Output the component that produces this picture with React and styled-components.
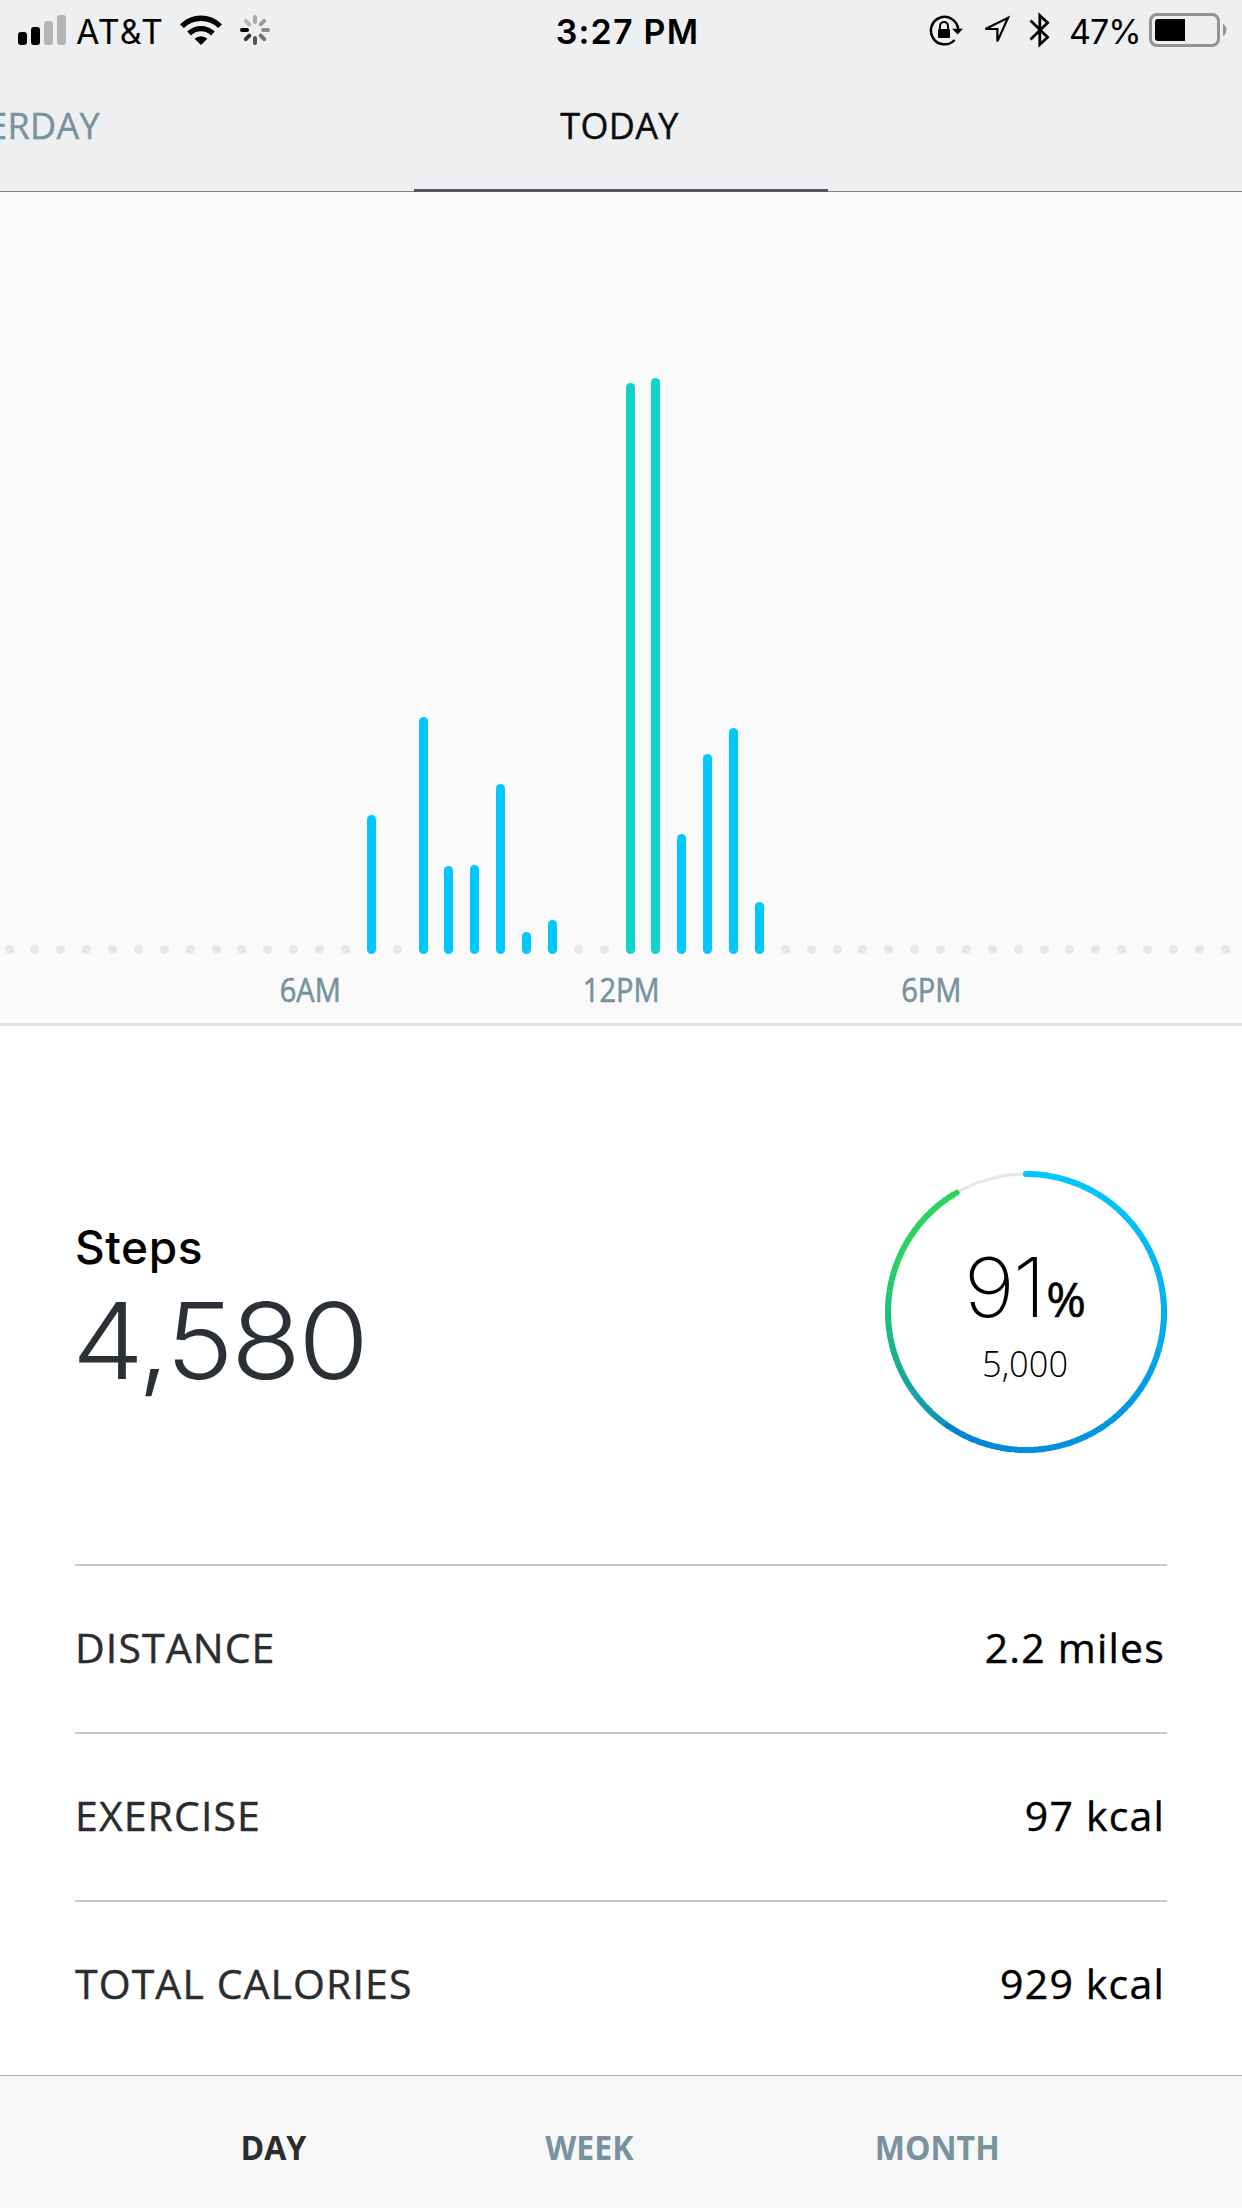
import styled, { createGlobalStyle } from "styled-components";

const GlobalStyle = createGlobalStyle`
*{
    box-sizing:border-box;
}
body{
    margin:0;
    background:#fff;
}
`

// half-hour slots, value is the bar height (0 = no activity)
const slots = Array(48).fill(0)
const activity = {
    14: 139, 16: 237, 17: 88, 18: 89, 19: 170, 20: 22, 21: 34,
    24: 571, 25: 576, 26: 120, 27: 200, 28: 226, 29: 52
}
Object.keys(activity).forEach((i) => { slots[i] = activity[i] })

const stats = [
    { label: "DISTANCE", value: "2.2 miles" },
    { label: "EXERCISE", value: "97 kcal" },
    { label: "TOTAL CALORIES", value: "929 kcal" },
]

// colour stops of the goal ring: degrees from the top, rgb
const ringStops = [
    [0, [0, 200, 255]],
    [50, [4, 192, 250]],
    [90, [0, 174, 240]],
    [135, [0, 152, 226]],
    [180, [4, 142, 220]],
    [214, [4, 128, 206]],
    [215, [16, 148, 180]],
    [245, [26, 172, 150]],
    [270, [34, 192, 122]],
    [290, [44, 208, 104]],
    [330, [46, 211, 94]],
]

const ringColor = (deg) => {
    const i = Math.max(1, ringStops.findIndex(([d]) => d >= deg))
    const [d0, a] = ringStops[i - 1]
    const [d1, b] = ringStops[i]
    const t = (deg - d0) / (d1 - d0)
    return `rgb(${a.map((c, k) => Math.round(c + (b[k] - c) * t)).join(",")})`
}

const point = (deg, r = 138) => {
    const a = (deg * Math.PI) / 180
    return `${(141 + r * Math.sin(a)).toFixed(2)} ${(141 - r * Math.cos(a)).toFixed(2)}`
}

function GoalRing() {
    const arcs = []
    for (let d = 0; d < 329; d += 2) {
        arcs.push(d)
    }
    return (
        <RingSvg viewBox="0 0 282 282">
            <circle cx="141" cy="141" r="138" fill="none" stroke="#e4e7e9" strokeWidth="3" />
            {arcs.map((d) => {
                const end = Math.min(d + 2.4, 329.8)
                return (
                    <path
                        key={d}
                        d={`M${point(d)}A138 138 0 0 1 ${point(end)}`}
                        fill="none"
                        stroke={ringColor(d)}
                        strokeWidth="6"
                        strokeLinecap={d === 0 || d >= 328 ? "round" : "butt"}
                    />
                )
            })}
        </RingSvg>
    )
}

function StatusBar() {
    return (
        <StatusWrapper>
            <StatusSide>
                <svg width="49" height="31" viewBox="0 0 49 31">
                    <rect x="0" y="17" width="9" height="13" rx="3" />
                    <rect x="13" y="12" width="9" height="18" rx="3" />
                    <rect x="26" y="6" width="9" height="24" rx="3" fill="#b3b4b5" />
                    <rect x="39" y="0" width="9" height="30" rx="3" fill="#b3b4b5" />
                </svg>
                <Carrier>AT&amp;T</Carrier>
                <Wifi width="42" height="30" viewBox="0 0 42 30">
                    <path d="M0 9.2A29.8 29.8 0 0 1 42 9.2L38.2 13A24.4 24.4 0 0 0 3.8 13Z" />
                    <path d="M7.2 16.6A19.6 19.6 0 0 1 34.8 16.6L31 20.4A14.2 14.2 0 0 0 11 20.4Z" />
                    <path d="M14.6 23.8A9.2 9.2 0 0 1 27.4 23.8L21 30Z" />
                </Wifi>
                <svg width="30" height="30" viewBox="-15 -15 30 30">
                    {["#a8a9aa", "#9a9b9c", "#8a8b8c", "#707172", "#555", "#333", "#000", "#b5b6b7"].map((c, i) => (
                        <line key={i} x1="0" y1="-13" x2="0" y2="-8" stroke={c} strokeWidth="4" strokeLinecap="round" transform={`rotate(${i * 45})`} />
                    ))}
                </svg>
            </StatusSide>
            <Clock>3:27 PM</Clock>
            <StatusSide $end>
                <svg width="35" height="36" viewBox="0 0 35 36">
                    <path d="M25.6 28A13.7 13.7 0 1 1 29.2 17" fill="none" stroke="#000" strokeWidth="2.5" />
                    <path d="M23.2 16.8H34L28.6 22.6Z" />
                    <rect x="9" y="17" width="12" height="9" rx="1" />
                    <path d="M11 17.5V14A4 4 0 0 1 19 14V17.5" fill="none" stroke="#000" strokeWidth="2" />
                </svg>
                <Locate width="30" height="36" viewBox="0 0 30 36">
                    <path d="M4.4 17L27 5.8L16.4 29.4V17Z" fill="none" stroke="#000" strokeWidth="2.2" />
                </Locate>
                <Bluetooth width="22" height="36" viewBox="0 0 22 36">
                    <path d="M1.5 8.6L18.6 25.2L10.8 32.6V3.4L18.6 10.8L1.5 27.4" fill="none" stroke="#000" strokeWidth="2.8" />
                </Bluetooth>
                <Percent>47%</Percent>
                <svg width="78" height="34" viewBox="0 0 78 34">
                    <rect x="1.5" y="1.5" width="68" height="31" rx="6.5" fill="none" stroke="#929394" strokeWidth="3" />
                    <path d="M9 6H36V28H9A3 3 0 0 1 6 25V9A3 3 0 0 1 9 6Z" />
                    <path d="M74 11A7 7 0 0 1 74 23Z" fill="#929394" />
                </svg>
            </StatusSide>
        </StatusWrapper>
    )
}

function App() {
    return (
        <Page>
            <GlobalStyle />
            <Header>
                <StatusBar />
                <Tabs>
                    <Tab $past>YESTERDAY</Tab>
                    <Tab $active>TODAY</Tab>
                </Tabs>
            </Header>

            <Chart>
                <Bars>
                    {slots.map((h, i) => (
                        <Slot key={i}>
                            <Bar $goal={h > 500} $on={h > 0} style={{ height: h || 9 }} />
                        </Slot>
                    ))}
                </Bars>
                <Axis>
                    <span>6AM</span>
                    <span>12PM</span>
                    <span>6PM</span>
                </Axis>
            </Chart>

            <Summary>
                <div>
                    <StepsLabel>Steps</StepsLabel>
                    <StepsCount>4,580</StepsCount>
                </div>
                <Goal>
                    <GoalRing />
                    <GoalPercent><b>91</b><small>%</small></GoalPercent>
                    <GoalTarget>5,000</GoalTarget>
                </Goal>
            </Summary>

            <Stats>
                {stats.map(({ label, value }) => (
                    <StatRow key={label}>
                        <StatLabel>{label}</StatLabel>
                        <StatValue>{value}</StatValue>
                    </StatRow>
                ))}
            </Stats>

            <Footer>
                <Range $active>DAY</Range>
                <Range>WEEK</Range>
                <Range>MONTH</Range>
            </Footer>
        </Page>
    )
}

const Page = styled.div`
width:1242px;
height:2208px;
display:flex;
flex-direction:column;
overflow:hidden;
background:#fff;
color:#000;
font-family:"Open Sans", "Noto Sans", sans-serif;
`

const Header = styled.header`
height:192px;
background:#eeeff1;
border-bottom:1px solid #808388;
`

const StatusWrapper = styled.div`
height:63px;
display:grid;
grid-template-columns:1fr auto 1fr;
font-family:Inter, sans-serif;
font-size:34px;
line-height:63px;
white-space:nowrap;
`

const StatusSide = styled.div`
display:flex;
align-items:center;
height:60px;
justify-content:${(p) => (p.$end ? "flex-end" : "flex-start")};
padding:${(p) => (p.$end ? "0 15px 0 0" : "0 0 0 18px")};
svg{
    flex:none;
}
`

const Carrier = styled.span`
width:104px;
margin-left:9px;
line-height:62px;
letter-spacing:1.2px;
padding-top:3px;
`

const Wifi = styled.svg`
margin-right:18px;
`

const Clock = styled.div`
padding-left:13px;
font-weight:600;
letter-spacing:1.2px;
`

const Locate = styled.svg`
margin-left:17px;
`

const Bluetooth = styled.svg`
margin-left:18px;
`

const Percent = styled.span`
width:80px;
margin-left:18px;
padding-top:3px;
letter-spacing:-1px;
`

const Tabs = styled.nav`
height:129px;
display:grid;
grid-template-columns:repeat(3, 414px);
`

const Tab = styled.div`
display:flex;
justify-content:${(p) => (p.$past ? "flex-end" : "center")};
padding-right:${(p) => (p.$past ? "314px" : "3px")};
line-height:126px;
font-size:36px;
letter-spacing:0.3px;
-webkit-text-stroke:0.4px;
color:${(p) => (p.$active ? "#0b0c0e" : "#78929e")};
border-bottom:${(p) => (p.$active ? "3px solid #55585d" : "none")};
`

const Chart = styled.section`
height:834px;
background:#fafafa;
border-bottom:3px solid #dfe1e4;
`

const Bars = styled.div`
height:762px;
display:grid;
grid-template-columns:repeat(48, 1fr);
align-items:end;
`

const Slot = styled.div`
padding-left:4.5px;
`

const Bar = styled.div`
width:9px;
border-radius:4.5px;
background:${(p) => (p.$goal ? "#10d4cb" : p.$on ? "#00c8ff" : "#e3e8ea")};
`

const Axis = styled.div`
display:grid;
grid-template-columns:repeat(3, 1fr);
padding:16px 155.25px 0;
text-align:center;
font-size:33px;
line-height:40px;
color:#78929e;
-webkit-text-stroke:0.6px;
span{
    transform:scaleX(0.88);
}
`

const Summary = styled.section`
height:538px;
padding:34px 75px 0;
display:flex;
justify-content:space-between;
align-items:center;
`

const StepsLabel = styled.div`
font-family:Inter, sans-serif;
font-size:46px;
font-weight:500;
line-height:56px;
letter-spacing:0.6px;
`

const StepsCount = styled.div`
width:fit-content;
margin-left:-3px;
padding-top:1px;
font-family:Inter, sans-serif;
font-size:106px;
font-weight:300;
line-height:130px;
letter-spacing:-2.4px;
color:#2a3035;
transform:scaleX(1.08);
transform-origin:left;
`

const Goal = styled.div`
position:relative;
width:282px;
height:282px;
padding-top:76px;
text-align:center;
`

const RingSvg = styled.svg`
position:absolute;
inset:0;
width:282px;
height:282px;
`

const GoalPercent = styled.div`
padding-left:3px;
font-family:Inter, sans-serif;
font-size:82px;
line-height:82px;
white-space:nowrap;
b{
    display:inline-block;
    font-weight:200;
    letter-spacing:-2px;
    transform:scaleX(1.07);
    transform-origin:right;
}
small{
    margin-left:2px;
    font-family:"Open Sans", sans-serif;
    font-size:48px;
    font-weight:500;
    line-height:1;
    -webkit-text-stroke:0.6px;
}
`

const GoalTarget = styled.div`
margin-top:12px;
padding-right:2px;
font-size:37px;
font-weight:300;
line-height:44px;
transform:scaleX(0.93);
`

const Stats = styled.section`
margin:0 75px;
height:511px;
`

const StatRow = styled.div`
height:168px;
padding-bottom:4px;
display:flex;
justify-content:space-between;
align-items:center;
border-top:2px solid #c6cacd;
font-size:41px;
-webkit-text-stroke:0.4px;
`

const StatLabel = styled.span`
color:#2b2c2e;
letter-spacing:1.1px;
`

const StatValue = styled.span`
margin-right:2px;
letter-spacing:1.2px;
`

const Footer = styled.footer`
height:133px;
display:flex;
justify-content:center;
gap:233px;
background:#f7f7f7;
border-top:1px solid #b0b3b4;
padding-top:41px;
`

const Range = styled.div`
font-size:34.5px;
font-weight:700;
line-height:60px;
transform:scaleX(0.93);
color:${(p) => (p.$active ? "#2b2c2e" : "#78929e")};
`

export default App
